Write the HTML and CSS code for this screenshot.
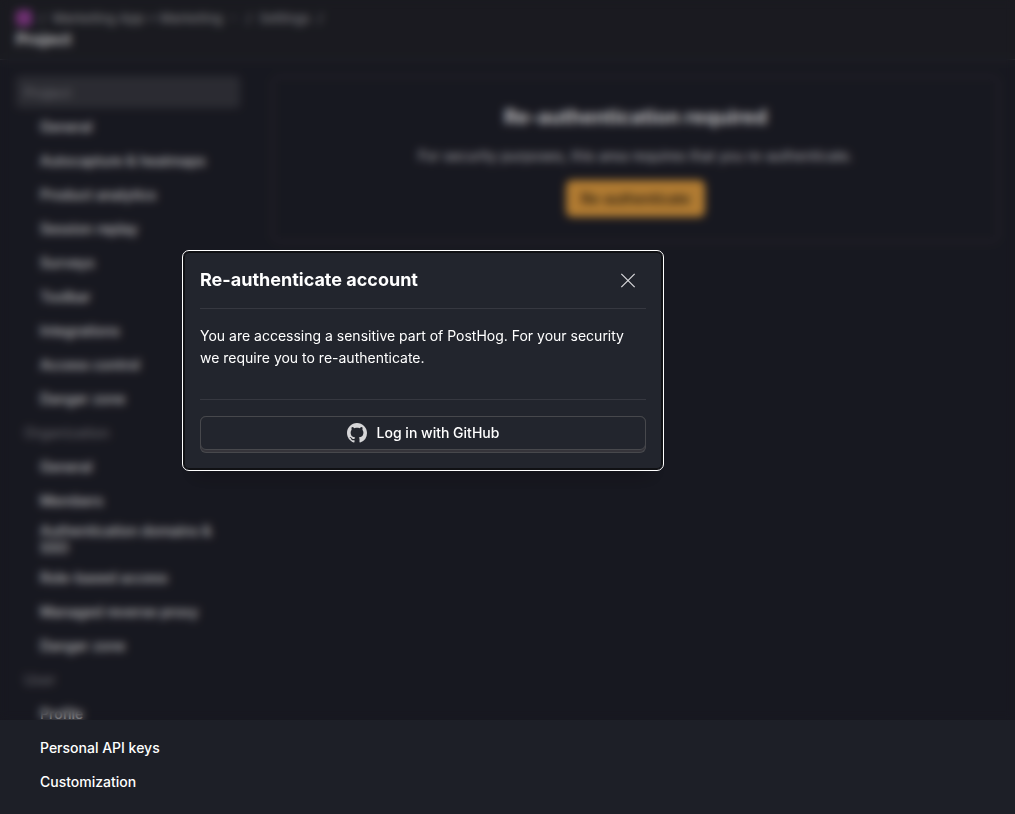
FILE: index.html
```html
<!DOCTYPE html>
<html lang="en">
<head>
<meta charset="utf-8">
<title>Settings</title>
<link rel="stylesheet" href="styles.css">
</head>
<body>
<header class="topbar">
  <nav class="breadcrumbs" aria-label="Breadcrumb">
    <span class="org-badge">M</span>
    <span class="slash">/</span>
    <a class="crumb" href="#">Marketing App + Marketing
      <svg class="chevron" viewBox="0 0 12 12" aria-hidden="true"><path d="M3 4.5l3 3 3-3"/></svg></a>
    <span class="slash">/</span>
    <a class="crumb" href="#">Settings</a>
    <span class="slash">/</span>
  </nav>
  <h1 class="page-title">Project</h1>
</header>
<div class="layout">
  <nav class="sidebar" aria-label="Settings sections">
    <a class="section active" href="#">Project</a>
    <a class="item" href="#">General</a>
    <a class="item" href="#">Autocapture &amp; heatmaps</a>
    <a class="item" href="#">Product analytics</a>
    <a class="item" href="#">Session replay</a>
    <a class="item" href="#">Surveys</a>
    <a class="item" href="#">Toolbar</a>
    <a class="item" href="#">Integrations</a>
    <a class="item" href="#">Access control</a>
    <a class="item" href="#">Danger zone</a>
    <a class="section" href="#">Organization</a>
    <a class="item" href="#">General</a>
    <a class="item" href="#">Members</a>
    <a class="item" href="#">Authentication domains &amp; SSO</a>
    <a class="item" href="#">Role-based access</a>
    <a class="item" href="#">Managed reverse proxy</a>
    <a class="item" href="#">Danger zone</a>
    <a class="section" href="#">User</a>
    <a class="item" href="#">Profile</a>
    <a class="item" href="#">Personal API keys</a>
    <a class="item" href="#">Customization</a>
  </nav>
  <main class="content">
    <section class="notice">
      <h2 class="notice-title">Re-authentication required</h2>
      <p class="notice-text">For security purposes, this area requires that you re-authenticate.</p>
      <button class="primary" type="button">Re-authenticate</button>
    </section>
  </main>
</div>
<div class="overlay">
  <div class="modal" role="dialog" aria-modal="true" aria-labelledby="modal-title">
    <div class="modal-header">
      <h3 class="modal-title" id="modal-title">Re-authenticate account</h3>
      <button class="close" type="button" aria-label="Close">
        <svg viewBox="0 0 24 24" aria-hidden="true"><path d="M4 4l16 16M20 4L4 20"/></svg>
      </button>
    </div>
    <p class="modal-body">You are accessing a sensitive part of PostHog. For your security we require you to re-authenticate.</p>
    <div class="modal-footer">
      <button class="login" type="button">
        <span class="login-face">
          <svg class="github" viewBox="0 0 16 16" aria-hidden="true"><path d="M8 0C3.58 0 0 3.58 0 8c0 3.54 2.29 6.53 5.47 7.59.4.07.55-.17.55-.38 0-.19-.01-.82-.01-1.49-2.01.37-2.53-.49-2.69-.94-.09-.23-.48-.94-.82-1.13-.28-.15-.68-.52-.01-.53.63-.01 1.08.58 1.23.82.72 1.21 1.87.87 2.33.66.07-.52.28-.87.51-1.07-1.78-.2-3.64-.89-3.64-3.95 0-.87.31-1.59.82-2.15-.08-.2-.36-1.02.08-2.12 0 0 .67-.21 2.2.82.64-.18 1.32-.27 2-.27s1.36.09 2 .27c1.53-1.04 2.2-.82 2.2-.82.44 1.1.16 1.92.08 2.12.51.56.82 1.27.82 2.15 0 3.07-1.87 3.75-3.65 3.95.29.25.54.73.54 1.48 0 1.07-.01 1.93-.01 2.2 0 .21.15.46.55.38A8.01 8.01 0 0 0 16 8c0-4.42-3.58-8-8-8z"/></svg>
          Log in with GitHub
        </span>
      </button>
    </div>
  </div>
</div>
</body>
</html>
```
FILE: styles.css
```css
* { box-sizing: border-box; }

body {
  margin: 0;
  background: #1d1f27;
  color: #fff;
  font: 14px/22px Inter, "Liberation Sans", sans-serif;
}

h1, h2, h3, p { margin: 0; }
a { color: inherit; text-decoration: none; }
button { font: inherit; color: inherit; cursor: pointer; }

.topbar {
  height: 60px;
  padding: 8px 16px;
  border-bottom: 1px solid #3a3c44;
  background: #202227;
}

.breadcrumbs {
  display: flex;
  align-items: center;
  gap: 8px;
  height: 20px;
  font-size: 13px;
  font-weight: 500;
  color: #a6a7aa;
}
.org-badge {
  width: 16px;
  height: 16px;
  border-radius: 4px;
  background: #a045a3;
  color: #7d3580;
  font-size: 10px;
  line-height: 16px;
  text-align: center;
}
.crumb { display: flex; align-items: center; gap: 4px; }
.chevron { width: 12px; height: 12px; fill: none; stroke: currentColor; }
.slash { color: #a6a7aa; }

.page-title { font-size: 16px; line-height: 22px; font-weight: 700; }

.layout {
  display: flex;
  gap: 32px;
  padding: 16px;
}

.sidebar {
  display: flex;
  flex: none;
  flex-direction: column;
  gap: 2px;
  width: 224px;
  line-height: 17px;
  font-weight: 500;
}
.section, .item {
  display: flex;
  align-items: center;
  min-height: 32px;
  padding: 4px 8px 3px;
  border-radius: 4px;
}
.section { color: #808186; }
.item { padding-left: 24px; }
.active { background: #383a40; }

.content { flex: 1; min-width: 0; }
.notice {
  display: flex;
  flex-direction: column;
  align-items: center;
  padding: 24px;
  border: 1px solid #3f4147;
  border-radius: 6px;
}
.notice-title { font-size: 20px; line-height: 32px; font-weight: 700; }
.notice-text { margin: 12px 0 13px; color: #e4e4e6; }
.primary {
  height: 37px;
  padding: 0 15px;
  border: 0;
  border-radius: 6px;
  background: #f1a840;
  color: #3a2a12;
  font-weight: 600;
}

.overlay {
  position: fixed;
  inset: 0 0 94px;
  display: flex;
  align-items: center;
  justify-content: center;
  padding: 1px 169px 0 0;
  background: rgba(12, 8, 13, 0.28);
  backdrop-filter: blur(4px);
}

.modal {
  width: 480px;
  padding: 16px;
  border: 1px solid #101114;
  border-radius: 6px;
  outline: 1px solid #fff;
  background: #22252d;
  box-shadow: inset 0 0 0 1px #101114, 0 16px 16px -16px rgba(0, 0, 0, 0.4);
}
.modal-header {
  display: flex;
  align-items: flex-start;
  justify-content: space-between;
  padding-bottom: 15px;
  border-bottom: 1px solid #363840;
}
.modal-title { font-size: 18px; line-height: 23px; font-weight: 700; }
.close {
  width: 36px;
  height: 25px;
  padding: 0 8px;
  border: 0;
  background: none;
}
.close svg {
  display: block;
  width: 20px;
  height: 25px;
  fill: none;
  stroke: #d6d6d8;
  stroke-width: 1.5;
}
.modal-body { padding: 16px 0 30px; border-bottom: 1px solid #363840; }
.modal-footer { padding-top: 16px; }
.login {
  display: block;
  width: 100%;
  padding: 0 0 2px;
  border: 1px solid #47484c;
  border-top: 0;
  border-radius: 6px;
  background: #35343a;
  font-weight: 500;
}
.login-face {
  display: flex;
  align-items: center;
  justify-content: center;
  gap: 10px;
  height: 34px;
  margin: 0 -1px;
  border: 1px solid #47484c;
  border-radius: 6px;
  background: #22252d;
}
.github { width: 20px; height: 20px; fill: #d6d6d8; }
```
